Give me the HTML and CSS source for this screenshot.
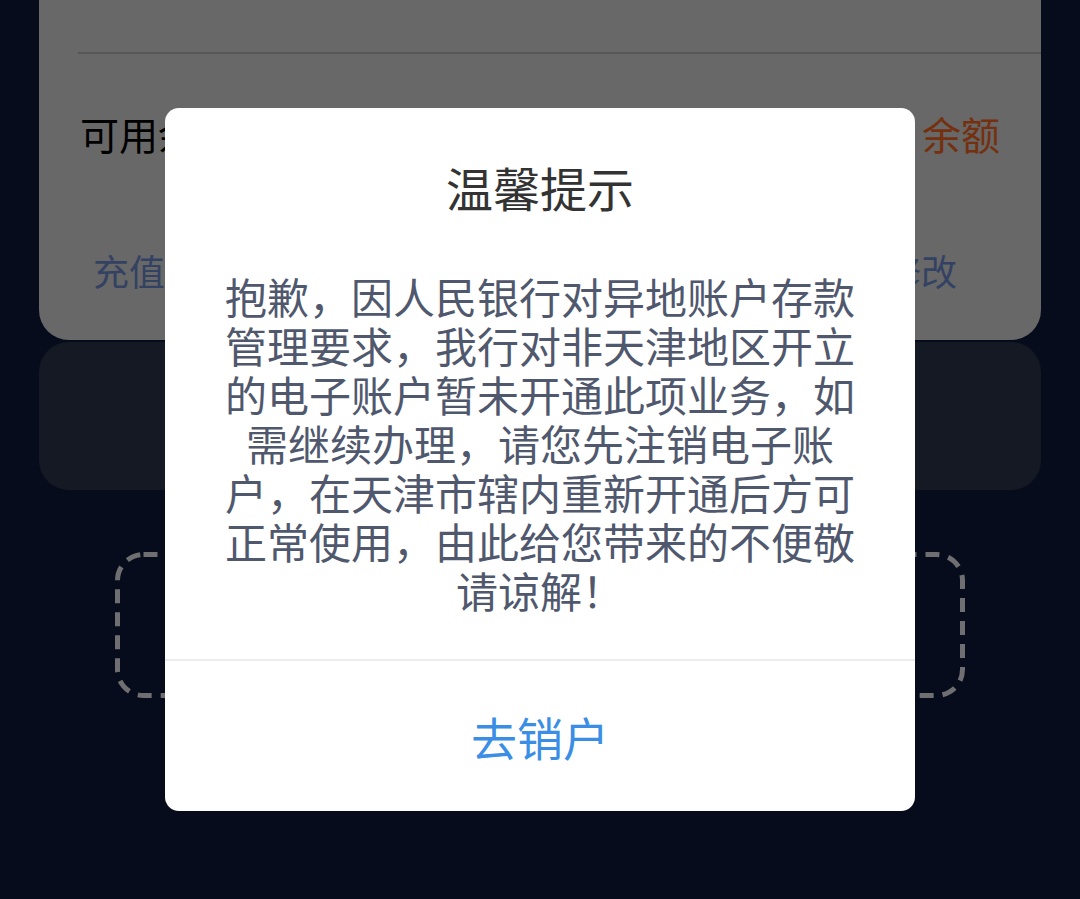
FILE: index.html
```html
<!DOCTYPE html>
<html lang="zh-CN">
<head>
<meta charset="utf-8">
<title>温馨提示</title>
<link rel="stylesheet" href="styles.css">
</head>
<body>
<div class="page">
  <div class="card-top">
    <div class="row-head"></div>
    <div class="row-balance">
      <span class="label">可用余额</span>
      <span class="link-orange">余额</span>
    </div>
    <div class="row-actions">
      <span class="link-blue">充值</span>
      <span class="link-blue">修改</span>
    </div>
  </div>
  <div class="card-dark"></div>
  <div class="dash-box">
    <svg class="dash-svg" width="850" height="146" viewBox="0 0 850 146">
      <rect x="2.5" y="2.5" width="845" height="141" rx="26" ry="26" fill="none" stroke="#6f6f71" stroke-width="5" stroke-dasharray="14 9"/>
    </svg>
  </div>
</div>

<div class="overlay">
  <div class="modal">
    <div class="modal-title">温馨提示</div>
    <div class="modal-body">抱歉，因人民银行对异地账户存款管理要求，我行对非天津地区开立的电子账户暂未开通此项业务，如需继续办理，请您先注销电子账户，在天津市辖内重新开通后方可正常使用，由此给您带来的不便敬请谅解！</div>
    <div class="modal-divider"></div>
    <div class="modal-button">去销户</div>
  </div>
</div>
</body>
</html>
```

FILE: styles.css
```css
html, body {
  margin: 0;
  padding: 0;
}
body {
  width: 1080px;
  height: 899px;
  overflow: hidden;
  background: #070c1c;
  font-family: "Noto Sans CJK SC", "Noto Sans", sans-serif;
  position: relative;
}
.page {
  padding: 0 39px;
}
.card-top {
  background: #686868;
  height: 340px;
  border-radius: 0 0 30px 30px;
  padding-left: 39px;
  box-sizing: border-box;
}
.row-head {
  height: 52px;
  border-bottom: 2px solid #575757;
}
.row-balance {
  height: 158px;
  display: flex;
  align-items: center;
  justify-content: space-between;
  padding: 0 41px 0 2px;
  font-size: 39px;
}
.label {
  color: #000;
}
.link-orange {
  color: #74300f;
}
.row-actions {
  height: 116px;
  display: flex;
  align-items: center;
  justify-content: space-between;
  padding: 0 84px 0 15px;
  font-size: 36px;
}
.link-blue {
  color: #334263;
}
.card-dark {
  margin-top: 2px;
  height: 148px;
  background: #151923;
  border-radius: 30px;
}
.dash-box {
  margin: 62px 0 0 76px;
  width: 850px;
  height: 146px;
}
.dash-svg {
  display: block;
}
.overlay {
  position: absolute;
  left: 0;
  top: 0;
  width: 1080px;
  height: 899px;
  display: flex;
  justify-content: center;
  align-items: flex-start;
  padding-top: 108px;
  box-sizing: border-box;
}
.modal {
  width: 750px;
  background: #fff;
  border-radius: 14px;
  overflow: hidden;
}
.modal-title {
  padding-top: 48px;
  height: 62px;
  line-height: 62px;
  font-size: 47px;
  color: #333;
  text-align: center;
}
.modal-body {
  margin-top: 53px;
  padding: 0 55px 45px;
  font-size: 42px;
  line-height: 49px;
  color: #50586e;
  text-align: center;
}
.modal-divider {
  height: 2px;
  background: #ececec;
}
.modal-button {
  height: 150px;
  display: flex;
  align-items: center;
  justify-content: center;
  font-size: 46px;
  color: #3a8ee6;
}
```
